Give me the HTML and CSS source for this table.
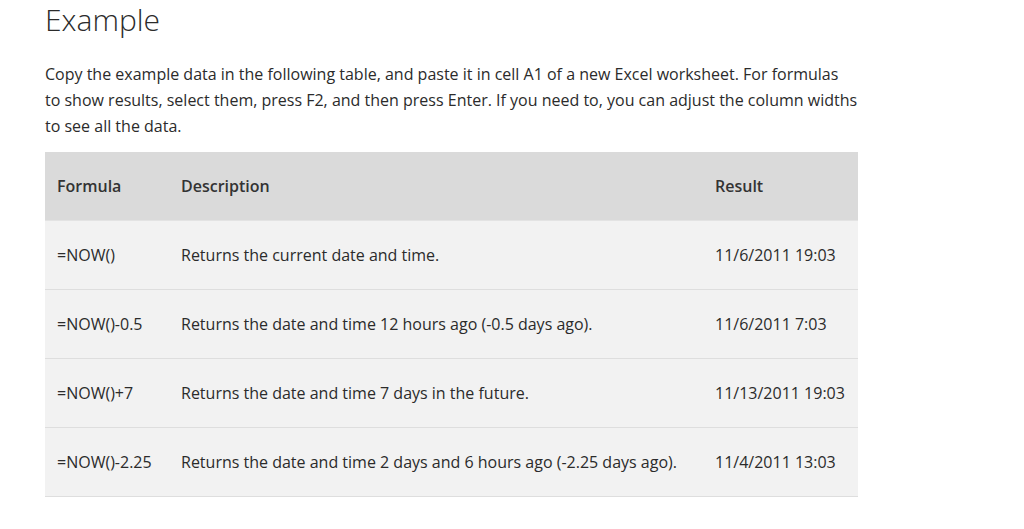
FILE: index.html
```html
<!DOCTYPE html>
<html lang="en">
<head>
<meta charset="utf-8">
<link rel="stylesheet" href="styles.css">
</head>
<body>
<main class="content">
  <h2 class="title">Example</h2>
  <p class="intro">Copy the example data in the following table, and paste it in cell A1 of a new Excel worksheet. For formulas<br>to show results, select them, press F2, and then press Enter. If you need to, you can adjust the column widths to see all the data.</p>
  <table class="data">
    <thead>
      <tr><th class="c1">Formula</th><th class="c2">Description</th><th class="c3">Result</th></tr>
    </thead>
    <tbody>
      <tr><td>=NOW()</td><td>Returns the current date and time.</td><td>11/6/2011 19:03</td></tr>
      <tr><td>=NOW()-0.5</td><td>Returns the date and time 12 hours ago (-0.5 days ago).</td><td>11/6/2011 7:03</td></tr>
      <tr><td>=NOW()+7</td><td>Returns the date and time 7 days in the future.</td><td>11/13/2011 19:03</td></tr>
      <tr><td>=NOW()-2.25</td><td>Returns the date and time 2 days and 6 hours ago (-2.25 days ago).</td><td>11/4/2011 13:03</td></tr>
    </tbody>
  </table>
</main>
</body>
</html>
```
FILE: styles.css
```css
html, body {
  margin: 0;
  padding: 0;
  background: #ffffff;
}
body {
  font-family: "Open Sans", "Noto Sans", sans-serif;
  color: #2b2b2b;
}
.content {
  width: 813px;
  padding-left: 45px;
}
.title {
  margin: 0;
  font-weight: 300;
  font-size: 30px;
  line-height: 40px;
  color: #2b2b2b;
}
.intro {
  margin: 21px 0 13px;
  font-size: 16px;
  line-height: 26px;
}
.data {
  width: 813px;
  border-collapse: collapse;
  font-size: 16px;
}
.data th, .data td {
  text-align: left;
  padding: 0 12px;
  height: 68px;
  vertical-align: middle;
  white-space: nowrap;
}
.data th {
  background: #dadada;
  font-weight: 600;
  color: #333;
}
.data td {
  background: #f2f2f2;
  border-bottom: 1px solid #dedede;
}
.data tbody tr:first-child td {
  border-top: 1px solid #e3e3e3;
}
.c1 { width: 100px; }
.c2 { width: 510px; }
```
